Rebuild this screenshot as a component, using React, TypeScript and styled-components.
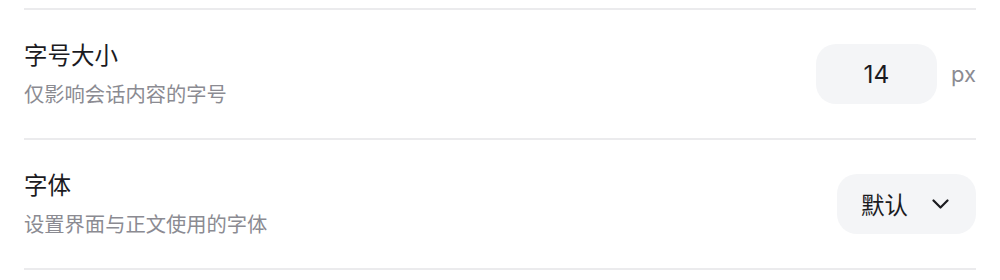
import React from "react";
import styled, { createGlobalStyle } from "styled-components";

const Global = createGlobalStyle`
  html, body { margin: 0; padding: 0; background: #ffffff; }
  body { font-family: "Inter", "Noto Sans CJK SC", sans-serif; -webkit-font-smoothing: antialiased; }
`;

const Page = styled.div`
  padding: 8px 24px 0 24px;
  width: 952px;
`;

const Section = styled.div`
  border-top: 2px solid #ebebed;
`;

const Row = styled.div`
  display: flex;
  align-items: center;
  justify-content: space-between;
  height: 128px;
  border-bottom: 2px solid #ebebed;
  box-sizing: content-box;
`;

const Texts = styled.div`
  display: flex;
  flex-direction: column;
  gap: 12px;
  padding-top: 2px;
`;

const Title = styled.div`
  font-size: 23.5px;
  line-height: 28px;
  color: #1b1b1f;
`;

const Desc = styled.div`
  font-size: 20.3px;
  line-height: 26px;
  color: #8b8b92;
`;

const Control = styled.div`
  display: flex;
  align-items: center;
  gap: 14px;
`;

const NumberBox = styled.div`
  width: 121px;
  height: 60px;
  border-radius: 20px;
  background: #f4f5f7;
  display: flex;
  align-items: center;
  justify-content: center;
  font-size: 24.5px;
  color: #1b1b1f;
`;

const Unit = styled.span`
  font-size: 22px;
  color: #8b8b92;
`;

const Select = styled.div`
  height: 60px;
  border-radius: 20px;
  background: #f4f5f7;
  display: flex;
  align-items: center;
  gap: 24px;
  padding: 0 27px 0 24px;
  font-size: 23.5px;
  color: #1b1b1f;
`;

const Chevron = () => (
  <svg width="17" height="10" viewBox="0 0 17 10" fill="none">
    <path d="M1.5 1.5 L8.5 8.5 L15.5 1.5" stroke="#1b1b1f" strokeWidth="2.2" strokeLinecap="round" strokeLinejoin="round" />
  </svg>
);

export default function App() {
  return (
    <>
      <Global />
      <Page>
        <Section>
          <Row>
            <Texts>
              <Title>字号大小</Title>
              <Desc>仅影响会话内容的字号</Desc>
            </Texts>
            <Control>
              <NumberBox>14</NumberBox>
              <Unit>px</Unit>
            </Control>
          </Row>
          <Row>
            <Texts>
              <Title>字体</Title>
              <Desc>设置界面与正文使用的字体</Desc>
            </Texts>
            <Control>
              <Select>
                默认
                <Chevron />
              </Select>
            </Control>
          </Row>
        </Section>
      </Page>
    </>
  );
}
